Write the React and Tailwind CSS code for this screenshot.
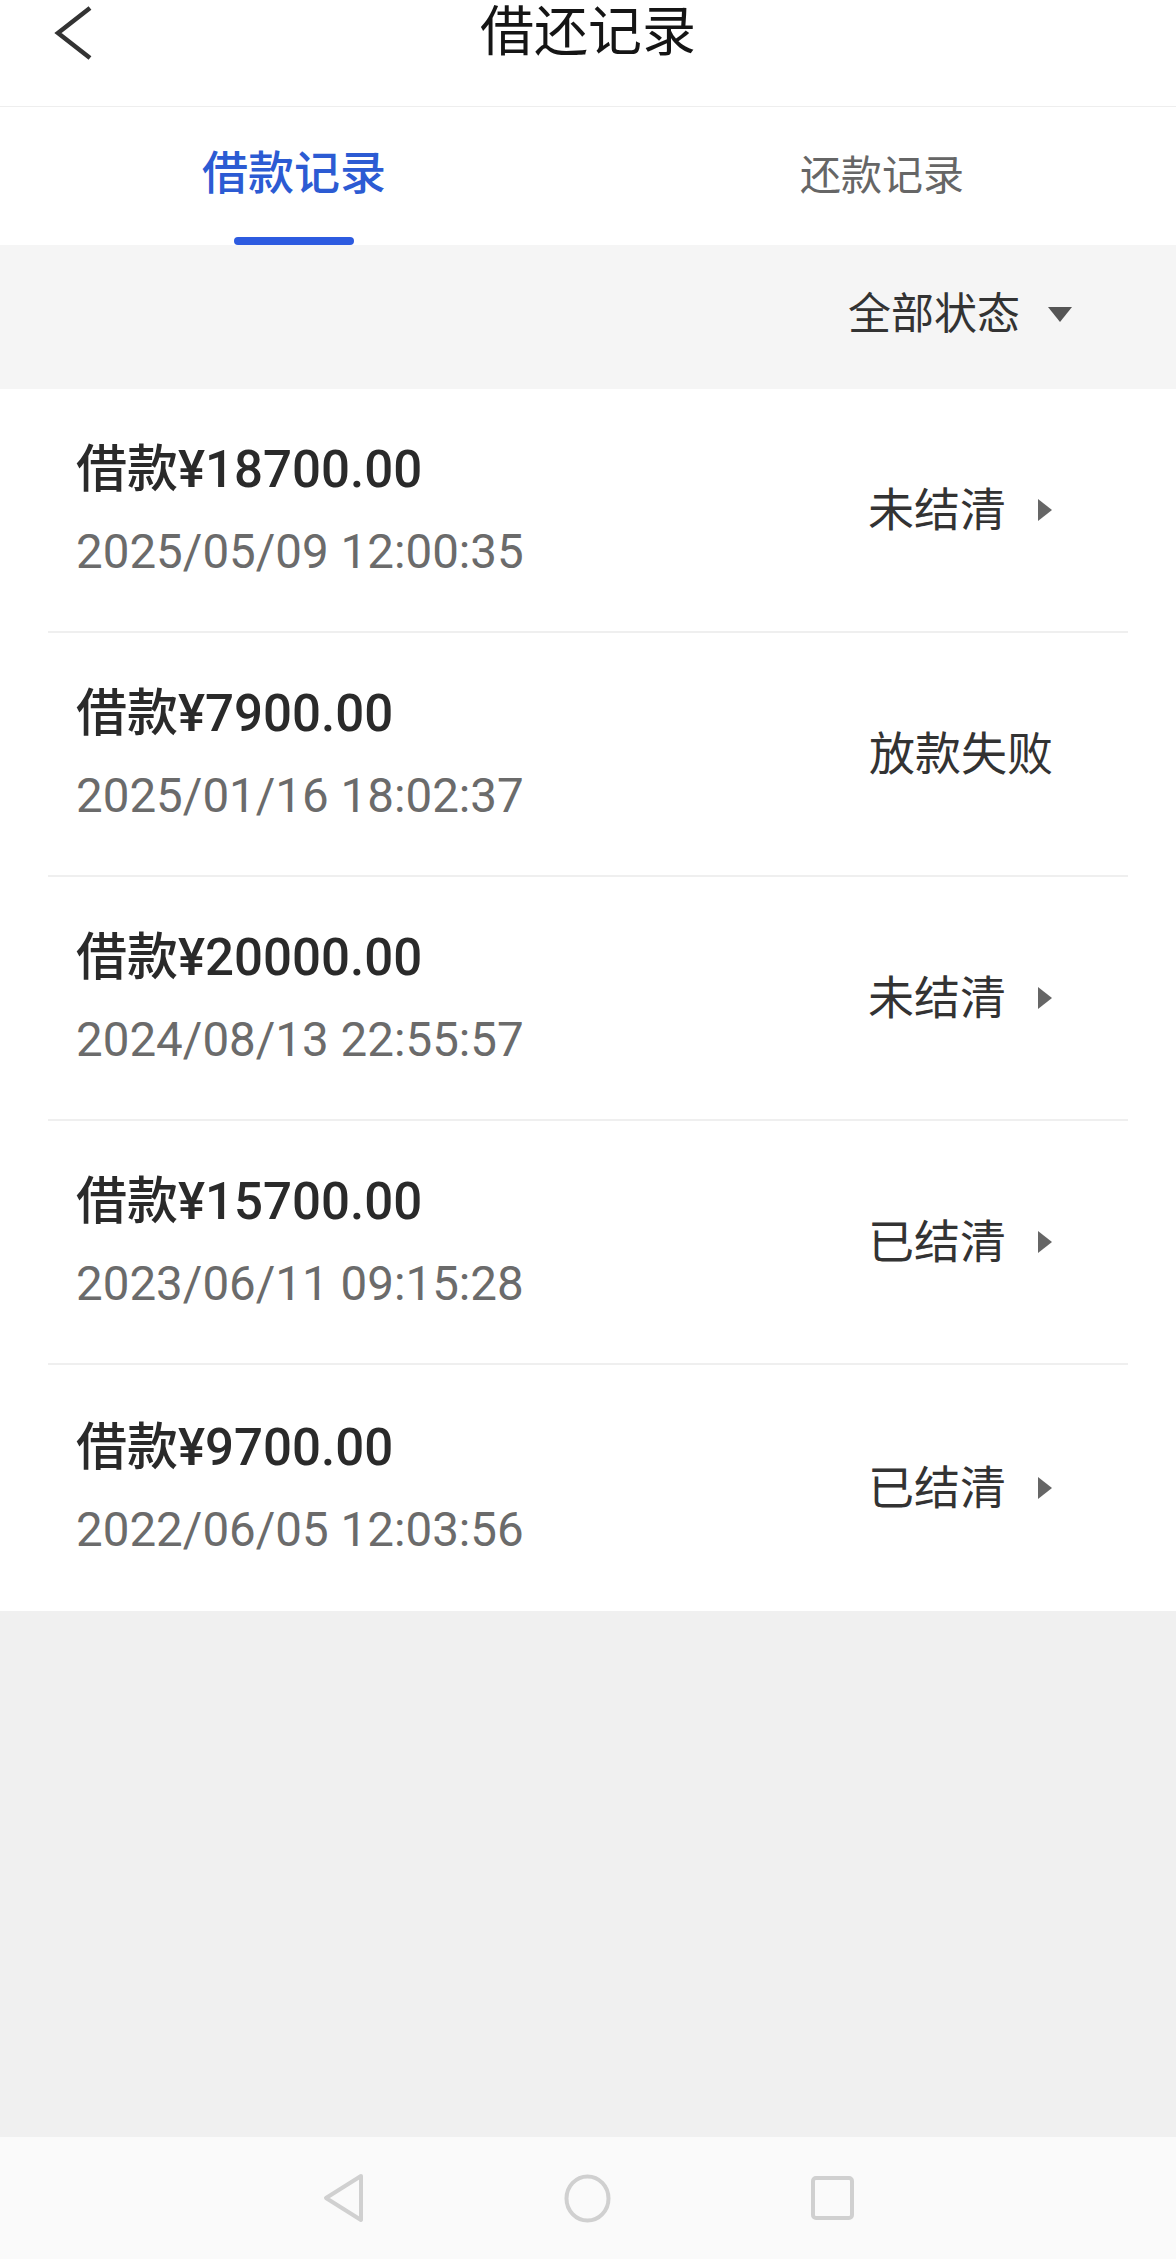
/*
  LoanRecords - 借还记录 list screen with tab switcher and status filter.
*/
import { useState } from 'react';

const FONT = "font-['Roboto','Noto_Sans_CJK_SC',sans-serif]";

const RECORDS = [
  { amount: '借款¥18700.00', time: '2025/05/09 12:00:35', status: '未结清', arrow: true },
  { amount: '借款¥7900.00', time: '2025/01/16 18:02:37', status: '放款失败', arrow: false },
  { amount: '借款¥20000.00', time: '2024/08/13 22:55:57', status: '未结清', arrow: true },
  { amount: '借款¥15700.00', time: '2023/06/11 09:15:28', status: '已结清', arrow: true },
  { amount: '借款¥9700.00', time: '2022/06/05 12:03:56', status: '已结清', arrow: true },
];

function RecordRow({ record, last }) {
  return (
    <div
      className={`mx-[48px] flex items-center justify-between pl-[28px] pr-[75px] ${
        last ? 'h-[246px]' : 'h-[244px] border-b-2 border-[#efefef]'
      }`}
    >
      <div className="flex flex-col">
        <p className="text-[51px] leading-[60px] font-medium text-[#2a2a2a]">{record.amount}</p>
        <p className="mt-[24px] text-[47.5px] leading-[56px] text-[#6b6b6b]">{record.time}</p>
      </div>
      <div className="flex items-center">
        <span className="text-[46px] leading-[56px] text-[#333333]">{record.status}</span>
        {record.arrow && (
          <svg className="ml-[31px]" width="16" height="24" viewBox="0 0 16 24">
            <path d="M1 1 L15 12 L1 23 Z" fill="#666666" />
          </svg>
        )}
      </div>
    </div>
  );
}

export default function App() {
  const [tab, setTab] = useState(0);

  return (
    <div className={`${FONT} w-[1176px] h-[2259px] flex flex-col bg-[#f0f0f0]`}>
      {/* header */}
      <div className="h-[107px] bg-white border-b border-[#eeeeee] grid grid-cols-[1fr_auto_1fr]">
        <div className="flex items-start pt-[5px] pl-[54px]">
          <svg width="40" height="56" viewBox="0 0 40 56">
            <polyline points="36,3 4,28 36,53" fill="none" stroke="#333333" strokeWidth="4.5" />
          </svg>
        </div>
        <h1 className="pt-[1px] text-[54px] leading-[64px] text-[#151515]">借还记录</h1>
        <div />
      </div>

      {/* tabs */}
      <div className="h-[138px] bg-white flex">
        {['借款记录', '还款记录'].map((label, i) => (
          <button
            key={label}
            onClick={() => setTab(i)}
            className="flex-1 flex flex-col items-center"
          >
            {tab === i ? (
              <>
                <span className="mt-[38px] text-[46px] leading-[56px] font-medium text-[#2c5bd3]">{label}</span>
                <span className="mt-auto w-[120px] h-[8px] rounded-full bg-[#2d5be0]" />
              </>
            ) : (
              <span className="mt-[44px] text-[41px] leading-[50px] text-[#666666]">{label}</span>
            )}
          </button>
        ))}
      </div>

      {/* filter */}
      <div className="h-[144px] bg-[#f5f5f5] flex items-center justify-end pr-[104px] pb-[6px]">
        <span className="text-[43px] leading-[52px] text-[#333333]">全部状态</span>
        <svg className="ml-[28px]" width="24" height="16" viewBox="0 0 24 16">
          <path d="M0 1 L24 1 L12 16 Z" fill="#555555" />
        </svg>
      </div>

      {/* list */}
      <div className="bg-white">
        {RECORDS.map((r, i) => (
          <RecordRow key={r.time} record={r} last={i === RECORDS.length - 1} />
        ))}
      </div>

      <div className="flex-1" />

      {/* system nav bar */}
      <div className="h-[122px] bg-[#fafafa] flex items-center justify-center gap-[200px]">
        <svg width="41" height="50" viewBox="0 0 41 50">
          <path d="M38 3 L3 25 L38 47 Z" fill="none" stroke="#d0d0d0" strokeWidth="4" strokeLinejoin="round" />
        </svg>
        <svg width="47" height="49" viewBox="0 0 47 49">
          <ellipse cx="23.5" cy="24.5" rx="21" ry="22" fill="none" stroke="#d0d0d0" strokeWidth="4" />
        </svg>
        <svg width="43" height="44" viewBox="0 0 43 44">
          <rect x="2" y="2" width="39" height="40" rx="3" fill="none" stroke="#d0d0d0" strokeWidth="4" />
        </svg>
      </div>
    </div>
  );
}
